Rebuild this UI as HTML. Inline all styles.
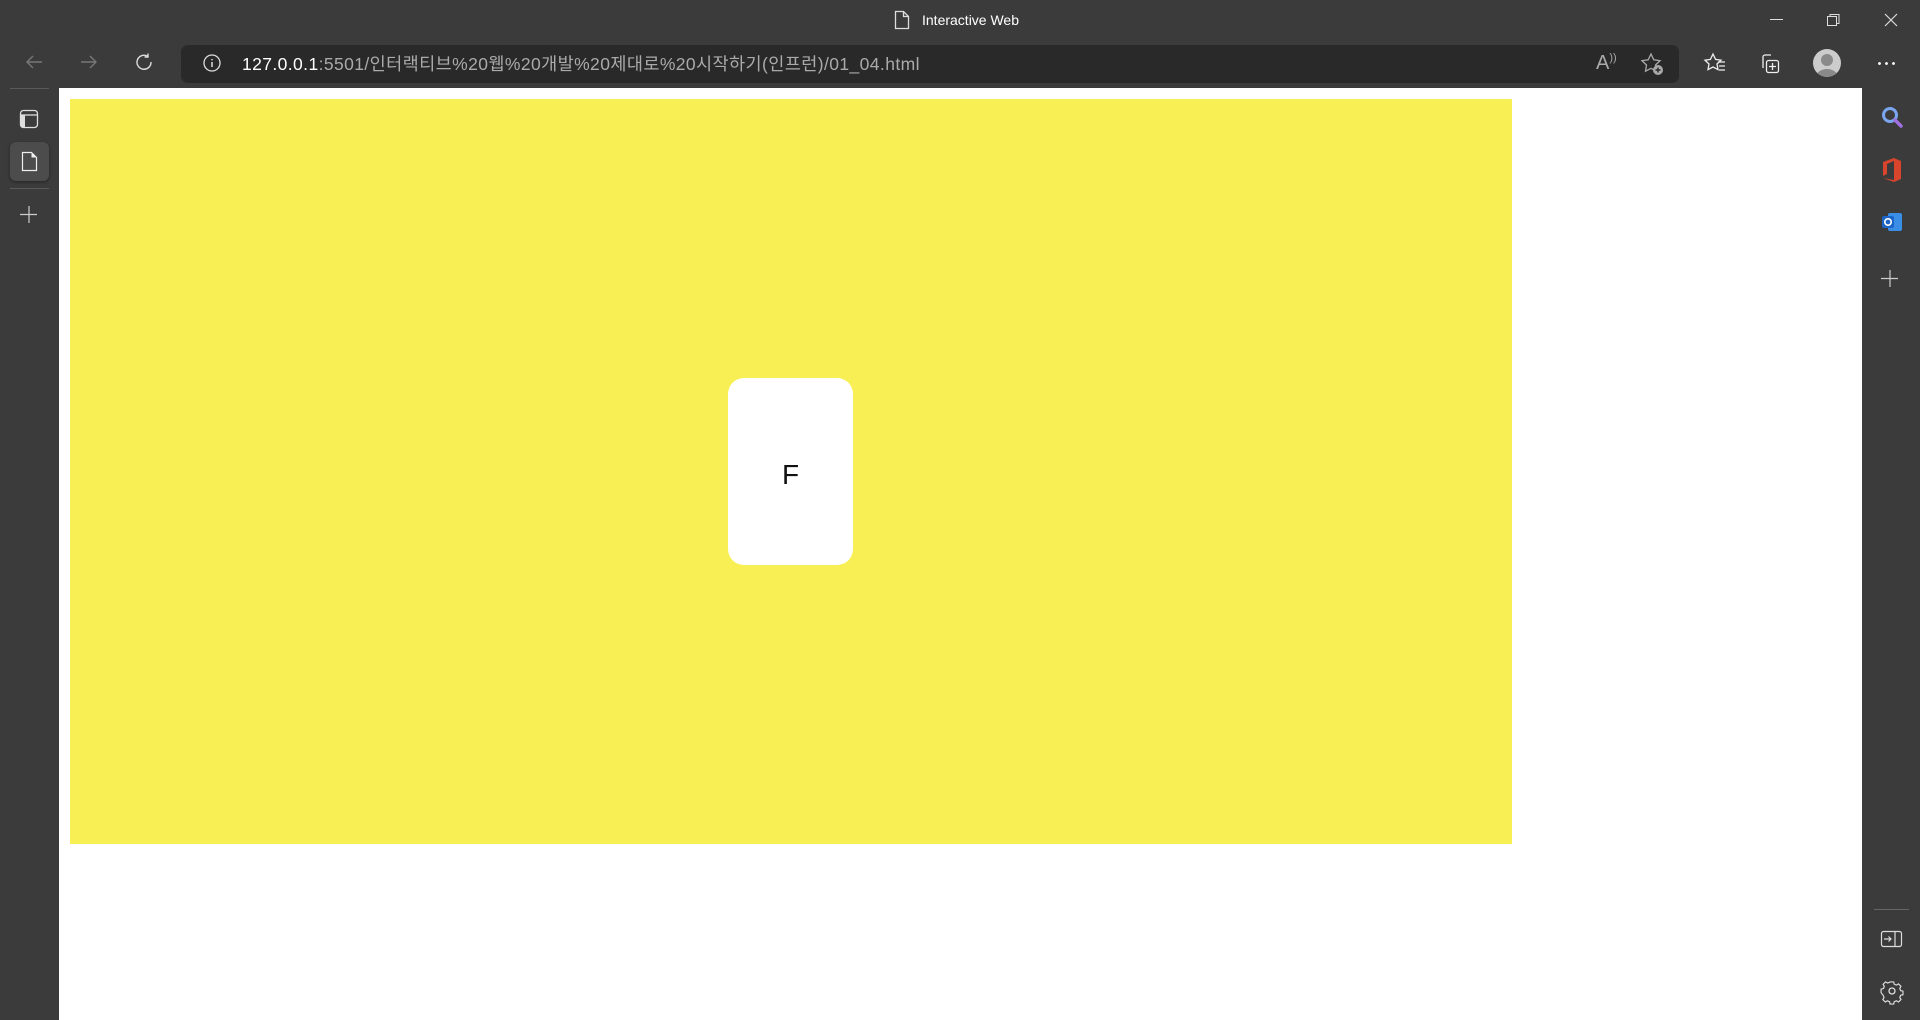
<!DOCTYPE html>
<html><head><meta charset="utf-8"><style>
*{margin:0;padding:0;box-sizing:border-box}
body{width:1920px;height:1020px;background:#3b3b3b;position:relative;overflow:hidden;font-family:"Liberation Sans","Noto Sans CJK KR",sans-serif}
.abs{position:absolute}
svg{position:absolute;overflow:visible}
</style></head><body>
<svg style="left:894px;top:10px" width="16" height="20"><path d="M1.5 1.5h8l5 5v12h-13z M9.5 1.5v5h5" fill="none" stroke="#ddd" stroke-width="1.3"/></svg>
<div class="abs" style="left:922px;top:12px;color:#fff;font-size:14px">Interactive Web</div>
<svg style="left:1770px;top:19px" width="14" height="2"><path d="M0 .5h13" stroke="#ddd"/></svg>
<svg style="left:1827px;top:13px" width="14" height="14"><path d="M.5 3.5h9v9h-9z M3 3.5V1.5h9v9h-2.5" fill="none" stroke="#ddd"/></svg>
<svg style="left:1884px;top:13px" width="14" height="14"><path d="M1 1l12 12M13 1L1 13" stroke="#ddd" stroke-width="1.2"/></svg>
<svg style="left:25px;top:54px" width="18" height="16"><path d="M17 8H2M8 2L2 8l6 6" fill="none" stroke="#777" stroke-width="1.4"/></svg>
<svg style="left:80px;top:54px" width="18" height="16"><path d="M1 8h15M10 2l6 6-6 6" fill="none" stroke="#777" stroke-width="1.4"/></svg>
<svg style="left:135px;top:53px" width="20" height="20"><path d="M16 9a7 7 0 1 1-3-5.5M13 0.5v3.5h-3.5" fill="none" stroke="#ddd" stroke-width="1.4"/></svg>
<div class="abs" style="left:181px;top:45px;width:1498px;height:38px;background:#292929;border-radius:7px"></div>
<svg style="left:203px;top:54px" width="20" height="20"><circle cx="9" cy="9" r="8" fill="none" stroke="#ddd" stroke-width="1.3"/><path d="M9 8v5M9 5v1.3" stroke="#ddd" stroke-width="1.5"/></svg>
<div class="abs" style="left:242px;top:51px;font-size:17.5px;color:#aaa;white-space:nowrap;letter-spacing:0.4px"><span style="color:#fff">127.0.0.1</span>:5501/인터랙티브%20웹%20개발%20제대로%20시작하기(인프런)/01_04.html</div>
<div class="abs" style="left:1596px;top:52px;font-size:20px;color:#aaa">A<span style="font-size:11px;vertical-align:top">))</span></div>
<svg style="left:1641px;top:53px" width="24" height="24"><path d="M10 1l2.8 5.8 6.2.9-4.5 4.3 1 6.2L10 15.3 4.5 18.2l1-6.2L1 7.7l6.2-.9z" fill="none" stroke="#aaa" stroke-width="1.3"/><circle cx="17" cy="17" r="5" fill="#aaa"/><path d="M17 14.5v5M14.5 17h5" stroke="#292929" stroke-width="1.4"/></svg>
<svg style="left:1704px;top:53px" width="24" height="22"><path d="M9 1l2.6 5.4 5.4.8-4 3.8 1 5.6L9 14 4 16.6l1-5.6L1 7.2l5.4-.8z" fill="none" stroke="#eee" stroke-width="1.3"/><path d="M14 9h7M15 13h6M15 17h6" stroke="#eee" stroke-width="1.3"/></svg>
<svg style="left:1759px;top:53px" width="22" height="22"><path d="M4 15V4a2 2 0 0 1 2-2h6" fill="none" stroke="#eee" stroke-width="1.3"/><rect x="7.5" y="7.5" width="12" height="12" rx="2" fill="none" stroke="#eee" stroke-width="1.3"/><path d="M13.5 10v7M10 13.5h7" stroke="#eee" stroke-width="1.3"/></svg>
<svg style="left:1813px;top:49px" width="30" height="30"><defs><clipPath id="c"><circle cx="14" cy="14" r="14"/></clipPath></defs><circle cx="14" cy="14" r="14" fill="#ccc"/><g clip-path="url(#c)" fill="#8a8a8a"><circle cx="14" cy="11" r="6"/><ellipse cx="14" cy="28" rx="11" ry="8"/></g></svg>
<div class="abs" style="left:1876px;top:62px;width:20px;height:3px;background:radial-gradient(circle,#eee 1.3px,transparent 1.6px) 0 0/7px 3px"></div>
<div class="abs" style="left:10px;top:88px;width:39px;height:1px;background:#5a5a5a"></div>
<svg style="left:20px;top:110px" width="20" height="20"><rect x=".5" y=".5" width="17" height="17" rx="3" fill="none" stroke="#ddd" stroke-width="1.3"/><path d="M1 5h16" stroke="#ddd" stroke-width="1.3"/><rect x="1" y="5" width="4" height="12" fill="#ddd"/></svg>
<div class="abs" style="left:10px;top:142px;width:39px;height:39px;background:#4c4c4c;border-radius:6px;box-shadow:0 1px 3px #0006"></div>
<svg style="left:22px;top:152px" width="16" height="20"><path d="M.5.5h9l5 5v13H.5z" fill="none" stroke="#eee" stroke-width="1.2"/><path d="M9.5.5v5h5z" fill="#eee"/></svg>
<div class="abs" style="left:10px;top:188px;width:39px;height:1px;background:#5a5a5a"></div>
<svg style="left:20px;top:206px" width="18" height="18"><path d="M9 0v17M0 8.5h17" stroke="#ccc" stroke-width="1.2"/></svg>
<div class="abs" style="left:59px;top:88px;width:1803px;height:932px;background:#fff"></div>
<div class="abs" style="left:70px;top:99px;width:1442px;height:745px;background:#f8ef54"></div>
<div class="abs" style="left:728px;top:378px;width:125px;height:187px;background:#fff;border-radius:16px;display:flex;align-items:center;justify-content:center;padding-top:6px;font-size:28px;color:#111;font-family:'Liberation Sans','DejaVu Sans',sans-serif">F</div>
<svg style="left:1881px;top:106px" width="24" height="24"><circle cx="9" cy="9" r="6.5" fill="none" stroke="#7aa6f0" stroke-width="3"/><path d="M14 14l6 6" stroke="#a070e0" stroke-width="3.5" stroke-linecap="round"/></svg>
<svg style="left:1881px;top:157px" width="22" height="26"><path d="M2 5l11-4 7 3v18l-7 3-11-4 11 2V4L6 7v10l-4 2z" fill="#d8442c"/></svg>
<svg style="left:1881px;top:211px" width="22" height="22"><rect x="7" y="2" width="14" height="18" rx="2" fill="#3a8ee6"/><rect x="1" y="5" width="12" height="12" rx="2" fill="#1d64c8"/><circle cx="7" cy="11" r="3.2" fill="none" stroke="#fff" stroke-width="1.6"/></svg>
<svg style="left:1881px;top:270px" width="18" height="18"><path d="M9 0v17M0 8.5h17" stroke="#ccc" stroke-width="1.2"/></svg>
<div class="abs" style="left:1874px;top:909px;width:35px;height:1px;background:#666"></div>
<svg style="left:1881px;top:931px" width="22" height="18"><rect x=".5" y=".5" width="20" height="15" rx="2" fill="none" stroke="#ddd" stroke-width="1.2"/><path d="M14 1v15M3 8h7M7.5 5.5L10 8l-2.5 2.5" fill="none" stroke="#ddd" stroke-width="1.2"/></svg>
<svg style="left:1881px;top:980px" width="22" height="22"><path d="M9 1h4l.6 2.6 2.4 1 2.3-1.4 2.8 2.8-1.4 2.3 1 2.4 2.6.6v4l-2.6.6-1 2.4 1.4 2.3-2.8 2.8-2.3-1.4-2.4 1-.6 2.6H9l-.6-2.6-2.4-1-2.3 1.4-2.8-2.8 1.4-2.3-1-2.4L-1 13V9l2.6-.6 1-2.4-1.4-2.3 2.8-2.8 2.3 1.4 2.4-1z" transform="translate(1 1) scale(.9)" fill="none" stroke="#ddd" stroke-width="1.3"/><circle cx="11" cy="11" r="3" fill="none" stroke="#ddd" stroke-width="1.3"/></svg>
</body></html>
